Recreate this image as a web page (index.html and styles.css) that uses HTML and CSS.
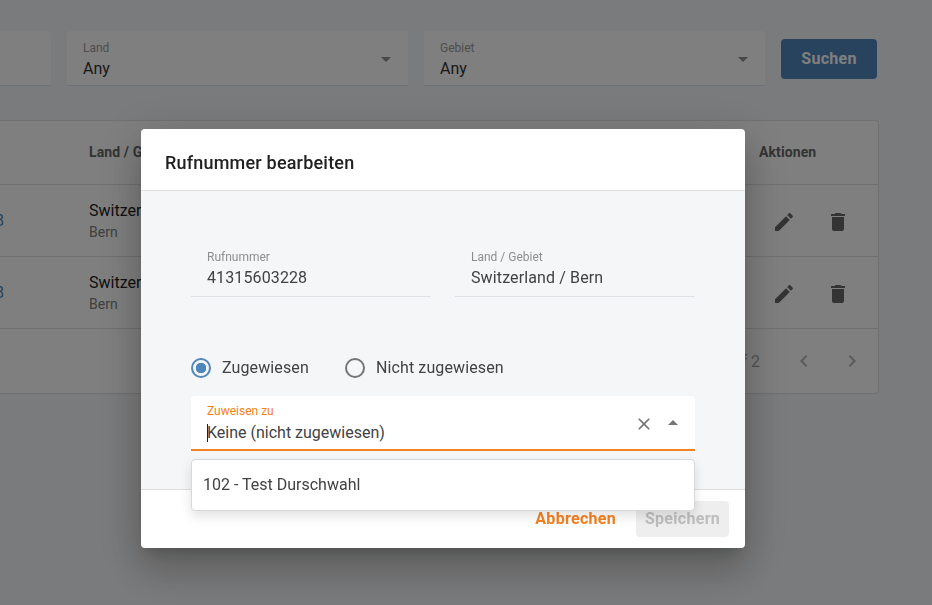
FILE: index.html
```html
<!DOCTYPE html>
<html>
  <head>
    <meta charset="UTF-8">
    <title>Rufnummern</title>
    <link rel="stylesheet" href="styles.css">
  </head>
  <body>
    <main class="page">
      <div class="filters">
        <div class="filter"></div>
        <div class="filter">
          <div>
            <div class="filter-label">Land</div>
            <div class="filter-value">Any</div>
          </div>
          <svg class="icon" viewBox="0 0 24 24"><path d="M7 10l5 5 5-5z"/></svg>
        </div>
        <div class="filter">
          <div>
            <div class="filter-label">Gebiet</div>
            <div class="filter-value">Any</div>
          </div>
          <svg class="icon" viewBox="0 0 24 24"><path d="M7 10l5 5 5-5z"/></svg>
        </div>
        <button class="search-btn">Suchen</button>
      </div>

      <div class="table">
        <div class="row row-head">
          <div></div>
          <div>Land / Gebiet</div>
          <div>Aktionen</div>
        </div>
        <div class="row">
          <a class="number">41315603228</a>
          <div>
            <div class="country">Switzerland</div>
            <div class="region">Bern</div>
          </div>
          <div class="actions">
            <svg class="icon" viewBox="0 0 24 24"><path d="M3 17.25V21h3.75L17.81 9.94l-3.75-3.75L3 17.25zM20.71 7.04c.39-.39.39-1.02 0-1.41l-2.34-2.34c-.39-.39-1.02-.39-1.41 0l-1.83 1.83 3.75 3.75 1.83-1.83z"/></svg>
            <svg class="icon" viewBox="0 0 24 24"><path d="M6 19c0 1.1.9 2 2 2h8c1.1 0 2-.9 2-2V7H6v12zM19 4h-3.5l-1-1h-5l-1 1H5v2h14V4z"/></svg>
          </div>
        </div>
        <div class="row">
          <a class="number">41315603228</a>
          <div>
            <div class="country">Switzerland</div>
            <div class="region">Bern</div>
          </div>
          <div class="actions">
            <svg class="icon" viewBox="0 0 24 24"><path d="M3 17.25V21h3.75L17.81 9.94l-3.75-3.75L3 17.25zM20.71 7.04c.39-.39.39-1.02 0-1.41l-2.34-2.34c-.39-.39-1.02-.39-1.41 0l-1.83 1.83 3.75 3.75 1.83-1.83z"/></svg>
            <svg class="icon" viewBox="0 0 24 24"><path d="M6 19c0 1.1.9 2 2 2h8c1.1 0 2-.9 2-2V7H6v12zM19 4h-3.5l-1-1h-5l-1 1H5v2h14V4z"/></svg>
          </div>
        </div>
        <div class="pager">
          <span>1 of 2</span>
          <svg class="icon" viewBox="0 0 24 24"><path d="M15.41 7.41L14 6l-6 6 6 6 1.41-1.41L10.83 12z"/></svg>
          <svg class="icon" viewBox="0 0 24 24"><path d="M10 6L8.59 7.41 13.17 12l-4.58 4.59L10 18l6-6z"/></svg>
        </div>
      </div>
    </main>

    <div class="overlay">
      <div class="modal">
        <div class="modal-title">Rufnummer bearbeiten</div>
        <div class="modal-body">
          <div class="fields">
            <div class="field">
              <div class="field-label">Rufnummer</div>
              <div class="field-value">41315603228</div>
            </div>
            <div class="field">
              <div class="field-label">Land / Gebiet</div>
              <div class="field-value">Switzerland / Bern</div>
            </div>
          </div>
          <div class="radios">
            <div class="radio">
              <span class="radio-dot checked"></span>
              <span class="radio-text">Zugewiesen</span>
            </div>
            <div class="radio">
              <span class="radio-dot"></span>
              <span class="radio-text">Nicht zugewiesen</span>
            </div>
          </div>
          <div class="assign">
            <div class="assign-text">
              <div class="assign-label">Zuweisen zu</div>
              <div class="assign-value"><span class="caret"></span>Keine (nicht zugewiesen)</div>
            </div>
            <svg class="assign-clear" viewBox="0 0 24 24"><path d="M19 6.41L17.59 5 12 10.59 6.41 5 5 6.41 10.59 12 5 17.59 6.41 19 12 13.41 17.59 19 19 17.59 13.41 12z"/></svg>
            <svg class="assign-arrow" viewBox="0 0 24 24"><path d="M7 14l5-5 5 5z"/></svg>
            <div class="menu">102 - Test Durschwahl</div>
          </div>
        </div>
        <div class="modal-foot">
          <button class="btn-cancel">Abbrechen</button>
          <button class="btn-save">Speichern</button>
        </div>
      </div>
    </div>
  </body>
</html>
```

FILE: styles.css
```css
html, body {
  margin: 0;
  height: 100%;
  overflow: hidden;
}
body {
  background: #f5f6f8;
  font-family: Roboto, sans-serif;
  font-size: 16px;
  color: #212121;
}
button {
  font-family: inherit;
  border: 0;
}
.icon {
  width: 24px;
  height: 24px;
  fill: #686868;
  flex: none;
}

/* page under the dialog, runs off the left edge */
.page {
  width: 1169px;
  margin-left: -290px;
  padding-top: 31px;
}
.filters {
  display: flex;
  align-items: center;
  gap: 16px;
}
.filter {
  width: 341px;
  height: 55px;
  box-sizing: border-box;
  padding: 10px 16px 0;
  background: #fff;
  border-bottom: 1px solid #dfe1e6;
  border-radius: 4px 4px 0 0;
  display: flex;
  justify-content: space-between;
  align-items: flex-start;
}
.filter .icon {
  margin: 6px -6px 0 0;
  fill: #909090;
}
.filter-label {
  font-size: 12px;
  line-height: 14px;
  color: #9a9a9a;
}
.filter-value {
  line-height: 21px;
  margin-top: 3px;
  color: #333;
}
.search-btn {
  width: 96px;
  height: 40px;
  margin-top: 1px;
  padding: 0 0 2px;
  background: #4f87bc;
  color: #fff;
  font-size: 16px;
  font-weight: 700;
  letter-spacing: .3px;
  border-radius: 4px;
}

.table {
  height: 274px;
  box-sizing: border-box;
  margin-top: 34px;
  background: #fff;
  border: 1px solid #e0e0e0;
  border-radius: 4px;
}
.row {
  display: grid;
  grid-template-columns: 378px 670px 1fr;
  height: 72px;
  box-sizing: border-box;
  border-bottom: 1px solid #e0e0e0;
  align-items: center;
}
.row-head {
  height: 64px;
  font-size: 14px;
  font-weight: 700;
  letter-spacing: .1px;
  color: #666;
  padding-bottom: 1px;
}
.number {
  justify-self: end;
  margin-right: 85px;
  color: #4f87bc;
}
.country {
  line-height: 20px;
}
.region {
  font-size: 14px;
  line-height: 16px;
  margin-top: 3px;
  color: #808080;
}
.actions {
  display: flex;
  gap: 30px;
  padding: 2px 0 0 13px;
}
.pager {
  display: flex;
  justify-content: flex-end;
  align-items: center;
  height: 64px;
  gap: 24px;
  padding-right: 14px;
  color: #a8a8a8;
}
.pager span {
  margin-right: 8px;
}
.pager .icon {
  fill: #b5b5b5;
}

/* dialog */
.overlay {
  position: fixed;
  inset: 0;
  background: rgba(0, 0, 0, .5);
  padding: 129px 0 0 141px;
}
.modal {
  width: 604px;
  height: 419px;
  display: flex;
  flex-direction: column;
  background: #fff;
  border-radius: 4px;
  box-shadow: 0 11px 15px -7px rgba(0, 0, 0, .2), 0 24px 38px 3px rgba(0, 0, 0, .14), 0 9px 46px 8px rgba(0, 0, 0, .12);
}
.modal-title {
  height: 62px;
  flex: none;
  box-sizing: border-box;
  padding: 0 24px;
  line-height: 67px;
  font-size: 18px;
  font-weight: 500;
  letter-spacing: .2px;
  border-bottom: 1px solid #e0e0e0;
}
.modal-body {
  flex: 1;
  background: #f5f6f8;
  padding: 0 50px;
}
.fields {
  display: flex;
  gap: 24px;
  margin-top: 52px;
}
.field {
  width: 240px;
  height: 54px;
  box-sizing: border-box;
  padding: 7px 16px 0;
  border-bottom: 1px solid #dfe1e6;
}
.field-label {
  font-size: 12px;
  line-height: 14px;
  color: #8e8e8e;
}
.field-value {
  line-height: 21px;
  margin-top: 3px;
  letter-spacing: .12px;
  color: #424242;
}
.radios {
  display: flex;
  gap: 36px;
  margin-top: 59px;
}
.radio {
  display: flex;
  align-items: center;
  gap: 11px;
  height: 24px;
  color: #424242;
  letter-spacing: .12px;
}
.radio-text {
  padding-bottom: 2px;
}
.radio-dot {
  width: 20px;
  height: 20px;
  box-sizing: border-box;
  border: 2px solid #757575;
  border-radius: 50%;
}
.radio-dot.checked {
  border-color: #4f87bc;
  background: radial-gradient(circle, #4f87bc 0 5px, transparent 5.5px);
}
.assign {
  position: relative;
  display: flex;
  align-items: center;
  height: 55px;
  box-sizing: border-box;
  margin-top: 16px;
  padding: 0 10px 0 16px;
  background: #fff;
  border-bottom: 2px solid #f58220;
  border-radius: 4px 4px 0 0;
}
.assign-text {
  flex: 1;
  margin-top: 1px;
}
.assign-label {
  font-size: 12px;
  line-height: 14px;
  color: #f58220;
}
.assign-value {
  position: relative;
  line-height: 21px;
  margin-top: 4px;
  color: #424242;
}
.caret {
  position: absolute;
  left: 0;
  top: 2px;
  width: 1px;
  height: 18px;
  background: #212121;
}
.assign-clear {
  width: 20px;
  height: 20px;
  fill: #757575;
  margin: 2px 7px 0 0;
}
.assign-arrow {
  width: 24px;
  height: 24px;
  fill: #757575;
}
.menu {
  position: absolute;
  left: 0;
  right: 0;
  top: 63px;
  height: 52px;
  box-sizing: border-box;
  padding: 0 11px;
  line-height: 50px;
  background: #fff;
  color: #424242;
  border: 1px solid #d6d8dc;
  border-radius: 4px;
  box-shadow: 0 5px 12px rgba(0, 0, 0, .12);
  z-index: 1;
}
.modal-foot {
  height: 59px;
  flex: none;
  box-sizing: border-box;
  border-top: 1px solid #e0e0e0;
  display: flex;
  justify-content: flex-end;
  align-items: center;
  gap: 20px;
  padding: 0 16px 0 0;
}
.btn-cancel, .btn-save {
  font-size: 16px;
  font-weight: 700;
  letter-spacing: .3px;
  height: 36px;
  padding: 0 0 2px;
  border-radius: 4px;
}
.btn-cancel {
  background: none;
  color: #f58220;
}
.btn-save {
  width: 93px;
  background: #eeeeee;
  color: #bdbdbd;
}
```
